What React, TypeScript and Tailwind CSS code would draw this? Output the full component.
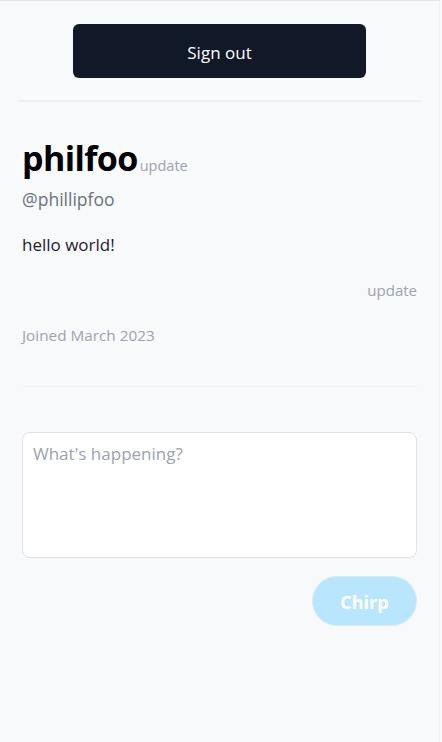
const font = { fontFamily: '"Open Sans", "Noto Sans", sans-serif' };

const App = () => {
  return (
    <div className="min-h-[742px] bg-[#f8f9fb]" style={font}>
      <div className="w-[440px] min-h-[742px] border-t border-r border-[#e3e5e8] border-r-[#eef0f2]">
        <div className="flex justify-center pt-[23px]">
          <button className="w-[293px] h-[54px] rounded-md bg-[#111827] pt-[3px] text-white text-[17px]">
            Sign out
          </button>
        </div>
        <div className="mx-[18px] mt-[22px] h-[2px] bg-[#eef0f3]" />
        <div className="px-[22px]">
          <div className="mt-[36px] flex items-baseline">
            <h1 className="text-[34px] font-bold leading-[40px] text-black tracking-[-0.6px]">
              philfoo
            </h1>
            <span className="ml-[2px] text-[14.5px] text-[#9ca3af]">update</span>
          </div>
          <p className="mt-[9px] text-[17.5px] leading-[24px] text-[#6b7280]">@phillipfoo</p>
          <p className="mt-[22px] text-[17px] leading-[24px] text-[#1f1b2e]">hello world!</p>
          <div className="mt-[22px] text-right text-[15px] leading-[22px] text-[#9ca3af]">
            update
          </div>
          <p className="mt-[23px] text-[15.3px] leading-[22px] text-[#9ca3af]">Joined March 2023</p>
          <div className="mt-[40px] h-px bg-[#eef0f3]" />
          <div className="mt-[45px]">
            <textarea
              className="block w-full h-[126px] resize-none rounded-lg border border-[#dfe1e6] bg-white px-[10px] py-[8px] text-[17px] placeholder:text-[#9ca3af] outline-none"
              placeholder="What's happening?"
            />
          </div>
          <div className="mt-[18px] flex justify-end">
            <button className="w-[105px] h-[50px] rounded-full bg-[#bae6fd] pt-[3px] text-white text-[18px] font-bold border border-[#d6ebf7]">
              Chirp
            </button>
          </div>
        </div>
      </div>
    </div>
  );
};

export default App;
